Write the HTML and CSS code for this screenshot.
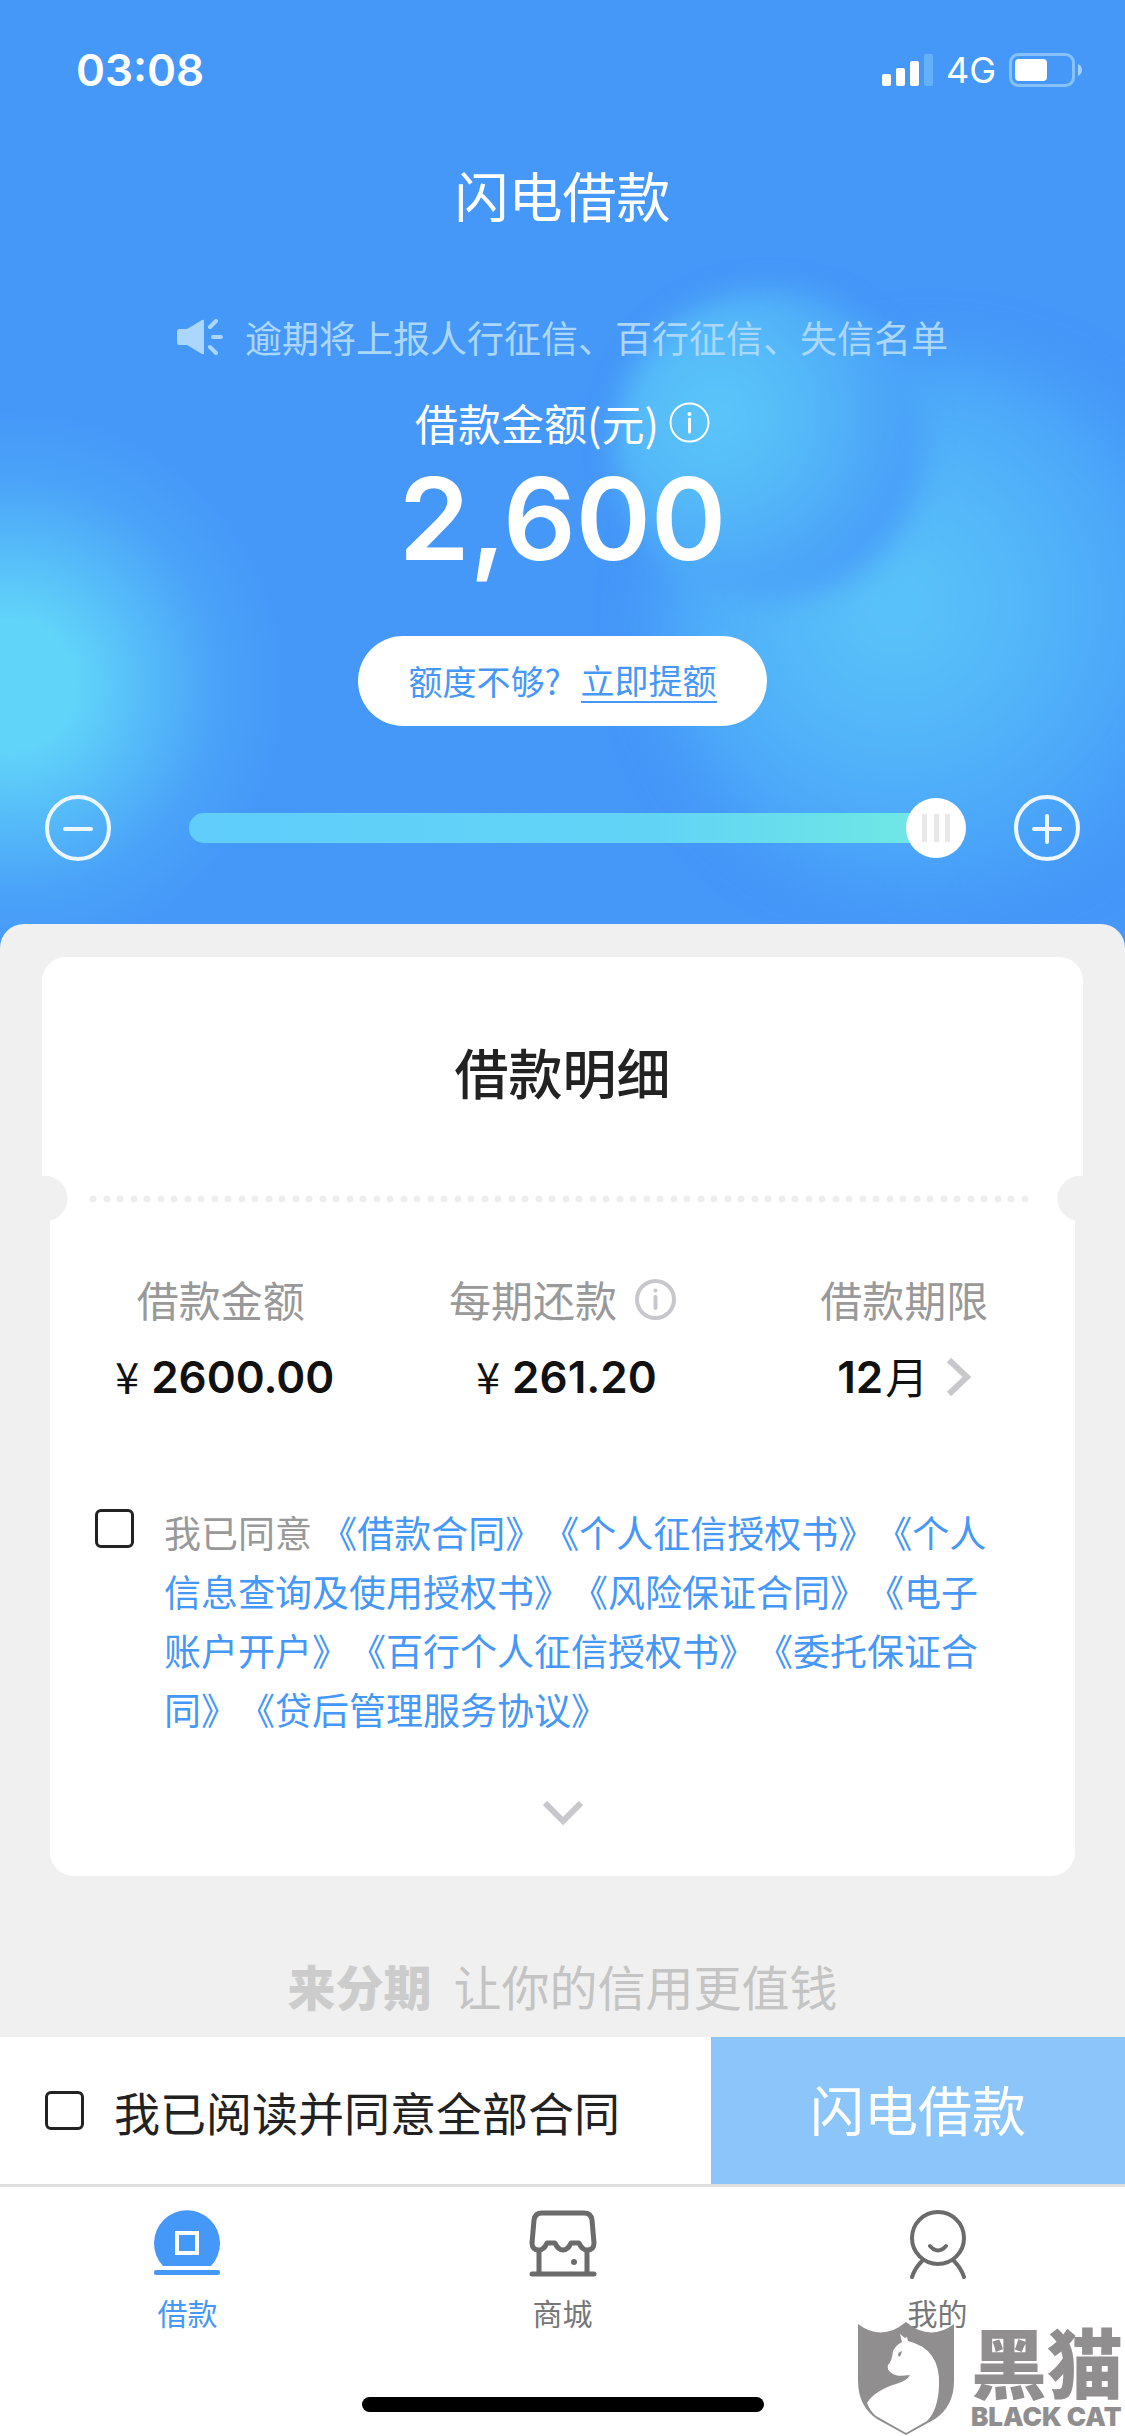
FILE: index.html
```html
<!DOCTYPE html>
<html lang="zh-CN">
<head>
  <meta charset="UTF-8" />
  <meta name="viewport" content="width=device-width, initial-scale=1" />
  <title>闪电借款</title>
  <link rel="stylesheet" href="styles.css">
</head>
<body>

  <header class="hero">
    <div class="status">
      <span class="time">03:08</span>
      <div class="status-right">
        <svg width="51" height="32" viewBox="0 0 51 32" fill="#fff">
          <rect x="0" y="20" width="9" height="12" rx="2" />
          <rect x="14" y="14" width="9" height="18" rx="2" />
          <rect x="28" y="7" width="9" height="25" rx="2" />
          <rect x="42" y="0" width="9" height="32" rx="2" fill="#64b0fb" />
        </svg>
        <span class="network">4G</span>
        <svg width="73" height="34" viewBox="0 0 73 34">
          <rect x="1.5" y="1.5" width="63" height="31" rx="8" fill="none" stroke="#86c1fa" stroke-width="3" />
          <rect x="6" y="6" width="32" height="22" rx="4" fill="#fff" />
          <path d="M69 11q4 2 4 6t-4 6z" fill="#a2d0fb" />
        </svg>
      </div>
    </div>

    <h1>闪电借款</h1>

    <p class="notice">
      <svg width="46" height="36" viewBox="0 0 46 36" fill="#aad7fb">
        <path d="M2 10h8L25 1q2-1 2 1v32q0 2-2 1L10 26H2q-2 0-2-2V12q0-2 2-2z" />
        <path d="M33 8l6-6M36 18h8M33 28l6 6" stroke="#aad7fb" stroke-width="4" stroke-linecap="round" />
      </svg>
      逾期将上报人行征信、百行征信、失信名单
    </p>

    <div class="amount-label">
      借款金额(元)
      <svg width="41" height="41" viewBox="0 0 41 41" fill="none" stroke="#fff">
        <circle cx="20.5" cy="20.5" r="19" stroke-width="2" />
        <path d="M20.5 17v13" stroke-width="3" stroke-linecap="round" />
        <circle cx="20.5" cy="12" r="2" fill="#fff" stroke="none" />
      </svg>
    </div>
    <div class="amount">2,600</div>

    <div class="raise">额度不够?<a href="#">立即提额</a></div>

    <div class="slider-row">
      <button class="step" aria-label="减少">
        <svg width="66" height="66" viewBox="0 0 66 66" fill="none" stroke="#eef7ff">
          <circle cx="33" cy="33" r="31" stroke-width="4" />
          <path d="M20 34h26" stroke-width="4" stroke-linecap="round" />
        </svg>
      </button>
      <input class="slider" type="range" min="500" max="2600" step="100" value="2600" aria-label="借款金额">
      <button class="step" aria-label="增加">
        <svg width="66" height="66" viewBox="0 0 66 66" fill="none" stroke="#eef7ff">
          <circle cx="33" cy="33" r="31" stroke-width="4" />
          <path d="M20 34h26M33 21v26" stroke-width="4" stroke-linecap="round" />
        </svg>
      </button>
    </div>
  </header>

  <main class="panel">
    <div class="card-top">
      <h2>借款明细</h2>
    </div>
    <div class="divider"></div>
    <div class="card">
      <div class="details">
        <div class="item">
          <div class="name">借款金额</div>
          <div class="value"><span class="yen">¥</span>2600.00</div>
        </div>
        <div class="item">
          <div class="name">每期还款
            <svg width="41" height="41" viewBox="0 0 41 41" fill="none" stroke="#c7c7cc">
              <circle cx="20.5" cy="20.5" r="18.5" stroke-width="4" />
              <path d="M20.5 18v11" stroke-width="4" stroke-linecap="round" />
              <circle cx="20.5" cy="11.5" r="2" fill="#c7c7cc" stroke="none" />
            </svg>
          </div>
          <div class="value"><span class="yen">¥</span>261.20</div>
        </div>
        <div class="item">
          <div class="name">借款期限</div>
          <div class="value">12<span class="unit">月</span>
            <svg width="25" height="38" viewBox="0 0 25 38" fill="none" stroke="#c7c7cc" stroke-width="6">
              <path d="M3 2l18 17L3 36" />
            </svg>
          </div>
        </div>
      </div>

      <div class="agree">
        <input type="checkbox" id="agree">
        <p class="contracts"><label for="agree">我已同意</label> <a href="#">《借款合同》</a><a href="#">《个人征信授权书》</a><a href="#">《个人信息查询及使用授权书》</a><a href="#">《风险保证合同》</a><a href="#">《电子账户开户》</a><a href="#">《百行个人征信授权书》</a><a href="#">《委托保证合同》</a><a href="#">《贷后管理服务协议》</a></p>
      </div>

      <button class="more" aria-label="展开">
        <svg width="40" height="25" viewBox="0 0 40 25" fill="none" stroke="#c7c7cc" stroke-width="6">
          <path d="M2 2l18 18L38 2" />
        </svg>
      </button>
    </div>

    <p class="slogan"><strong>来分期</strong>让你的信用更值钱</p>
  </main>

  <div class="submit-bar">
    <label class="agree-all"><input type="checkbox">我已阅读并同意全部合同</label>
    <button class="submit">闪电借款</button>
  </div>

  <footer class="footer">
    <nav class="tabs">
      <a href="#" class="active">
        <svg width="70" height="70" viewBox="0 0 70 70">
          <path d="M10 57A33 33 0 1 1 58 57z" fill="#4597f8" />
          <rect x="24" y="24" width="20" height="20" fill="none" stroke="#fff" stroke-width="4" />
          <rect x="1" y="61" width="66" height="5" rx="2" fill="#4597f8" />
        </svg>
        借款
      </a>
      <a href="#">
        <svg width="70" height="70" viewBox="0 0 70 70" fill="none" stroke="#6b6b6b" stroke-width="5">
          <path d="M14 4h42q7 0 8 7l2 23q0 7-7 7-5 0-8-7h-8q-3 7-8 7t-8-7h-8q-3 7-8 7-7 0-7-7l2-23q1-7 8-7z" stroke-linejoin="round" />
          <path d="M11 41v24M59 41v24" />
          <path d="M4 65h62" stroke-linecap="round" />
          <circle cx="46" cy="53" r="3" fill="#6b6b6b" stroke="none" />
        </svg>
        商城
      </a>
      <a href="#">
        <svg width="70" height="70" viewBox="0 0 70 70" fill="none" stroke="#6b6b6b" stroke-width="4" stroke-linecap="round">
          <circle cx="35" cy="29" r="26" />
          <path d="M27 37q8 9 16 0M19 52q-7 7-10 16M51 52q7 7 10 16" />
        </svg>
        我的
      </a>
    </nav>
    <div class="home-indicator"></div>

    <div class="watermark">
      <svg width="98" height="114" viewBox="0 0 98 114">
        <path d="M1 2q24 18 48-2 24 20 48 2v57q0 25-19 38L49 113 20 97Q1 84 1 59z" fill="#918e8f" />
        <path d="M49 111L19 94Q13 89 10 81 17 69 39 62q11-3 14-9-13 2-17-1-7-4-5-9 4-4 5-14 3-6 9-9l-2-8 5 4 2-1 1 4Q84 27 82 64q-1 24-12 35z" fill="#fff" />
        <path d="M41 33q0-3 4-4-1 5-3 6z" fill="#918e8f" />
      </svg>
      <div class="watermark-text">
        <span class="watermark-cn">黑猫</span>
        <span class="watermark-en">BLACK CAT</span>
      </div>
    </div>
  </footer>

</body>
</html>
```
FILE: styles.css
```css
* {
  box-sizing: border-box;
}

body {
  margin: 0;
  min-height: 100vh;
  display: flex;
  flex-direction: column;
  background: #fff;
  color: #222;
  font-family: "Noto Sans CJK SC", sans-serif;
  text-spacing-trim: space-all;
}

h1,
h2,
p {
  margin: 0;
}

a {
  color: #4597f8;
  text-decoration: none;
}

button {
  padding: 0;
  border: none;
  background: none;
  font-family: inherit;
  cursor: pointer;
}

svg {
  display: block;
  flex: none;
}

input[type="checkbox"] {
  appearance: none;
  flex: none;
  width: 39px;
  height: 39px;
  margin: 0;
  border: 3px solid #222;
  border-radius: 6px;
  background: #fff;
}

/* header */
.hero {
  position: relative;
  z-index: 0;
  overflow: hidden;
  display: flex;
  flex-direction: column;
  align-items: center;
  padding-bottom: 87px;
  color: #fff;
  background:
    radial-gradient(circle at 10px 685px, #61d4f9 0, #61d4f9 65px, rgba(97, 212, 249, 0.6) 135px, rgba(97, 212, 249, 0.2) 205px, rgba(97, 212, 249, 0) 280px),
    #4597f8;
}

/* soft light spots behind the amount */
.hero::before,
.hero::after {
  content: "";
  position: absolute;
  z-index: -1;
  border-radius: 50%;
}

.hero::before {
  top: 355px;
  right: -75px;
  width: 540px;
  height: 540px;
  background: radial-gradient(circle at 44% 46%, #5bc5f9 0, #54b7f9 30%, #4ba6f9 58%, #4597f8 82%);
  filter: blur(28px);
}

.hero::after {
  top: 290px;
  right: 200px;
  width: 310px;
  height: 310px;
  background: radial-gradient(circle at 33% 40%, #5bc6f9 0, #55baf8 30%, #4ca6f8 60%, #469af8 85%);
  filter: blur(14px);
}

.status {
  width: 100%;
  height: 139px;
  padding: 0 43px 0 76px;
  display: flex;
  align-items: center;
  justify-content: space-between;
  font-family: Inter, sans-serif;
}

.time {
  font-size: 44px;
  font-weight: 600;
}

.status-right {
  display: flex;
  align-items: center;
  gap: 13px;
}

.network {
  font-size: 36px;
}

h1 {
  font-size: 54px;
  line-height: 80px;
  font-weight: 400;
  margin-top: 16px;
}

.notice {
  display: flex;
  align-items: center;
  gap: 22px;
  margin-top: 75px;
  font-size: 37px;
  line-height: 54px;
  color: #aad7fb;
}

.amount-label {
  display: flex;
  align-items: center;
  gap: 10px;
  margin-top: 27px;
  font-size: 43px;
  line-height: 62px;
}

.amount {
  font-family: Inter, sans-serif;
  font-size: 114px;
  line-height: 131px;
  font-weight: 600;
}

.raise {
  display: flex;
  align-items: center;
  gap: 20px;
  height: 90px;
  margin-top: 52px;
  padding: 0 50px;
  border-radius: 45px;
  background: #fff;
  color: #4597f8;
  font-size: 34px;
  line-height: 42px;
}

.raise a {
  border-bottom: 2px solid #4597f8;
}

.slider-row {
  width: 100%;
  display: flex;
  align-items: center;
  margin-top: 69px;
  padding: 0 45px;
}

.slider {
  appearance: none;
  flex: 1;
  min-width: 0;
  height: 60px;
  margin: 0 48px 0 78px;
  background: none;
}

.slider::-webkit-slider-runnable-track {
  height: 30px;
  border-radius: 15px;
  background: linear-gradient(90deg, #60cdfb, #61d4f6 60%, #72ebe0);
}

.slider::-webkit-slider-thumb {
  appearance: none;
  width: 60px;
  height: 60px;
  margin-top: -15px;
  border-radius: 50%;
  background:
    linear-gradient(#e8e8e8, #e8e8e8) 16px center / 5px 28px no-repeat,
    linear-gradient(#e8e8e8, #e8e8e8) center / 5px 28px no-repeat,
    linear-gradient(#e8e8e8, #e8e8e8) 39px center / 5px 28px no-repeat,
    #fff;
}

/* loan details */
.panel {
  position: relative;
  z-index: 1;
  flex: 1 0 auto;
  margin-top: -24px;
  padding: 33px 42px 0;
  border-radius: 24px 24px 0 0;
  background: #f0f0f0;
}

.card-top {
  height: 219px;
  padding-top: 75px;
  border-radius: 24px 24px 0 0;
  background: #fff;
  text-align: center;
}

h2 {
  font-size: 54px;
  line-height: 80px;
  font-weight: 500;
}

.divider {
  height: 45px;
  padding: 19px 50px 0 47px;
  background:
    radial-gradient(circle at 3px center, #f0f0f0 22px, transparent 23px),
    radial-gradient(circle at calc(100% - 3px) center, #f0f0f0 22px, transparent 23px),
    linear-gradient(#fff, #fff) center / calc(100% - 16px) 100% no-repeat;
}

/* two dots in each tile */
.divider::before {
  content: "";
  display: block;
  height: 7px;
  background:
    radial-gradient(circle at 4px 4px, #eee 3px, transparent 4px) 0 0 / 27px 7px,
    radial-gradient(circle at 18px 4px, #eee 3px, transparent 4px) 0 0 / 27px 7px;
}

.card {
  margin: 0 8px;
  padding: 47px 0 50px;
  border-radius: 0 0 24px 24px;
  background: #fff;
}

.details {
  display: grid;
  grid-template-columns: repeat(3, 1fr);
}

.item {
  display: flex;
  flex-direction: column;
  align-items: center;
}

.name,
.value {
  display: flex;
  align-items: center;
}

.name {
  gap: 18px;
  font-size: 42px;
  line-height: 62px;
  color: #999;
}

.value {
  margin-top: 16px;
  font-family: Inter, sans-serif;
  font-size: 44px;
  line-height: 62px;
  font-weight: 600;
  color: #111;
}

.yen,
.unit {
  font-family: "Noto Sans CJK SC", sans-serif;
  font-size: 43px;
  line-height: 58px;
  font-weight: 400;
  padding-bottom: 4px;
}

.yen {
  margin: 0 12px 0 8px;
}

.unit {
  margin: 0 18px 0 2px;
}

.agree {
  display: flex;
  gap: 30px;
  margin-top: 95px;
  padding-left: 45px;
}

.agree input {
  margin-top: 6px;
}

.contracts {
  max-width: 845px;
  font-size: 37px;
  line-height: 59px;
  color: #999;
}

.more {
  display: block;
  margin: 62px auto 0;
}

.slogan {
  display: flex;
  align-items: center;
  justify-content: center;
  gap: 22px;
  padding: 73px 0 16px;
  font-size: 48px;
  line-height: 72px;
  color: #c4c4c4;
}

.slogan strong {
  font-weight: 900;
  color: #ccc;
}

/* submit bar */
.submit-bar {
  display: flex;
  flex: none;
  height: 147px;
}

.agree-all {
  flex: 1;
  display: flex;
  align-items: center;
  gap: 30px;
  padding-left: 45px;
  font-size: 46px;
}

.submit {
  width: 414px;
  padding-bottom: 4px;
  background: #8bc5f9;
  color: #fff;
  font-size: 54px;
}

/* tab bar */
.footer {
  position: relative;
  border-top: 3px solid #dfdfdf;
  padding-bottom: 24px;
}

.tabs {
  display: grid;
  grid-template-columns: repeat(3, 1fr);
  padding-top: 22px;
}

.tabs a {
  display: flex;
  flex-direction: column;
  align-items: center;
  gap: 11px;
  font-size: 30px;
  line-height: 44px;
  color: #777;
}

.tabs .active {
  color: #4597f8;
}

.home-indicator {
  width: 402px;
  height: 15px;
  margin: 63px auto 0;
  border-radius: 8px;
  background: #000;
}

.watermark {
  position: absolute;
  right: 2px;
  bottom: 0;
  display: flex;
  gap: 16px;
  color: #918e8f;
}

.watermark-text {
  display: flex;
  flex-direction: column;
}

.watermark-cn {
  font-size: 76px;
  line-height: 76px;
  font-weight: 900;
}

.watermark-en {
  font-family: Inter, sans-serif;
  font-size: 26px;
  line-height: 38px;
  font-weight: 900;
}
```
